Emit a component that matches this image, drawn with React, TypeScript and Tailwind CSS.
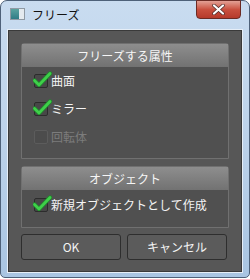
const font = { fontFamily: '"Noto Sans CJK JP", "Noto Sans", sans-serif' };

function Check({ checked, disabled }: { checked?: boolean; disabled?: boolean }) {
  return (
    <span
      className={`relative w-[14px] h-[14px] shrink-0 rounded-[2px] border ${
        disabled ? "border-[#5c5c5c] bg-[#4c4c4c]" : "border-[#2c2c2c] bg-[#474747]"
      }`}
    >
      {checked && (
        <svg className="absolute left-[-2px] top-[-4px]" width="19" height="17" viewBox="0 0 19 17">
          <path d="M1.5 9.5 L6 14 L17 2.5" fill="none" stroke="#1f8a2c" strokeWidth="4.2" strokeLinecap="round" strokeLinejoin="round" />
          <path d="M1.5 9.5 L6 14 L17 2.5" fill="none" stroke="#3fcf4a" strokeWidth="2.6" strokeLinecap="round" strokeLinejoin="round" />
        </svg>
      )}
    </span>
  );
}

function Row({ label, checked, disabled }: { label: string; checked?: boolean; disabled?: boolean }) {
  return (
    <div className="h-[28px] flex items-center gap-[3px] pl-[12px]">
      <Check checked={checked} disabled={disabled} />
      <span className={`text-[12px] leading-none ${disabled ? "text-[#7c7c7c]" : "text-[#f4f4f4]"}`}>{label}</span>
    </div>
  );
}

function Group({ title, children, bodyClass }: { title: string; children: React.ReactNode; bodyClass: string }) {
  return (
    <div className="rounded-t-[3px] border border-[#707070] bg-[#505050]">
      <div className="h-[23px] flex items-center justify-center bg-gradient-to-b from-[#8e8e8e] to-[#727272] text-[12px] text-[#f6f6f6] leading-none">
        {title}
      </div>
      <div className={bodyClass}>{children}</div>
    </div>
  );
}

export default function App() {
  return (
    <div className="w-[250px] h-[279px] bg-white" style={font}>
      <div className="w-[250px] h-[278px] rounded-t-[7px] rounded-b-[5px] border border-[#4e6179] bg-gradient-to-b from-[#c9dcf0] via-[#bcd2ea] to-[#a9c5e2] flex flex-col">
        <div className="h-[29px] shrink-0 flex items-start relative">
          <div className="mt-[7px] ml-[9px] w-[15px] h-[12px] border border-[#8f9aa4] bg-[#e4eaef] flex">
            <div className="w-[8px] h-full bg-gradient-to-b from-[#5aa3a0] to-[#2f7c86]" />
          </div>
          <span className="ml-[7px] mt-[6px] text-[12px] leading-[16px] text-[#111]">フリーズ</span>
          <div className="absolute right-[8px] top-[-1px] w-[45px] h-[19px] rounded-b-[4px] border border-[#6b2b24] bg-gradient-to-b from-[#e2a095] via-[#c9503f] to-[#b53a2b] flex items-center justify-center">
            <svg width="13" height="11" viewBox="0 0 13 11">
              <path d="M2 1.5 L11 9.5 M11 1.5 L2 9.5" stroke="#4a2a28" strokeWidth="3.6" strokeLinecap="round" />
              <path d="M2 1.5 L11 9.5 M11 1.5 L2 9.5" stroke="#ffffff" strokeWidth="2.2" strokeLinecap="round" />
            </svg>
          </div>
        </div>
        <div className="mx-[7px] h-[242px] border border-[#3a3a3a] bg-[#575757] shadow-[0_0_0_1px_#e6eef7] px-[12px] pt-[12px] flex flex-col">
          <Group title="フリーズする属性" bodyClass="pt-[0px] pb-[7px]">
            <Row label="曲面" checked />
            <Row label="ミラー" checked />
            <Row label="回転体" disabled />
          </Group>
          <div className="h-[7px]" />
          <Group title="オブジェクト" bodyClass="pt-[1px] pb-[8px]">
            <Row label="新規オブジェクトとして作成" checked />
          </Group>
          <div className="mt-[6px] flex gap-[6px]">
            <button className="w-[100px] h-[26px] rounded-[3px] border border-[#2e2e2e] bg-[#5b5b5b] text-[12px] text-[#f4f4f4]">
              OK
            </button>
            <button className="w-[100px] h-[26px] rounded-[3px] border border-[#2e2e2e] bg-[#5b5b5b] text-[12px] text-[#f4f4f4]">
              キャンセル
            </button>
          </div>
        </div>
      </div>
    </div>
  );
}
